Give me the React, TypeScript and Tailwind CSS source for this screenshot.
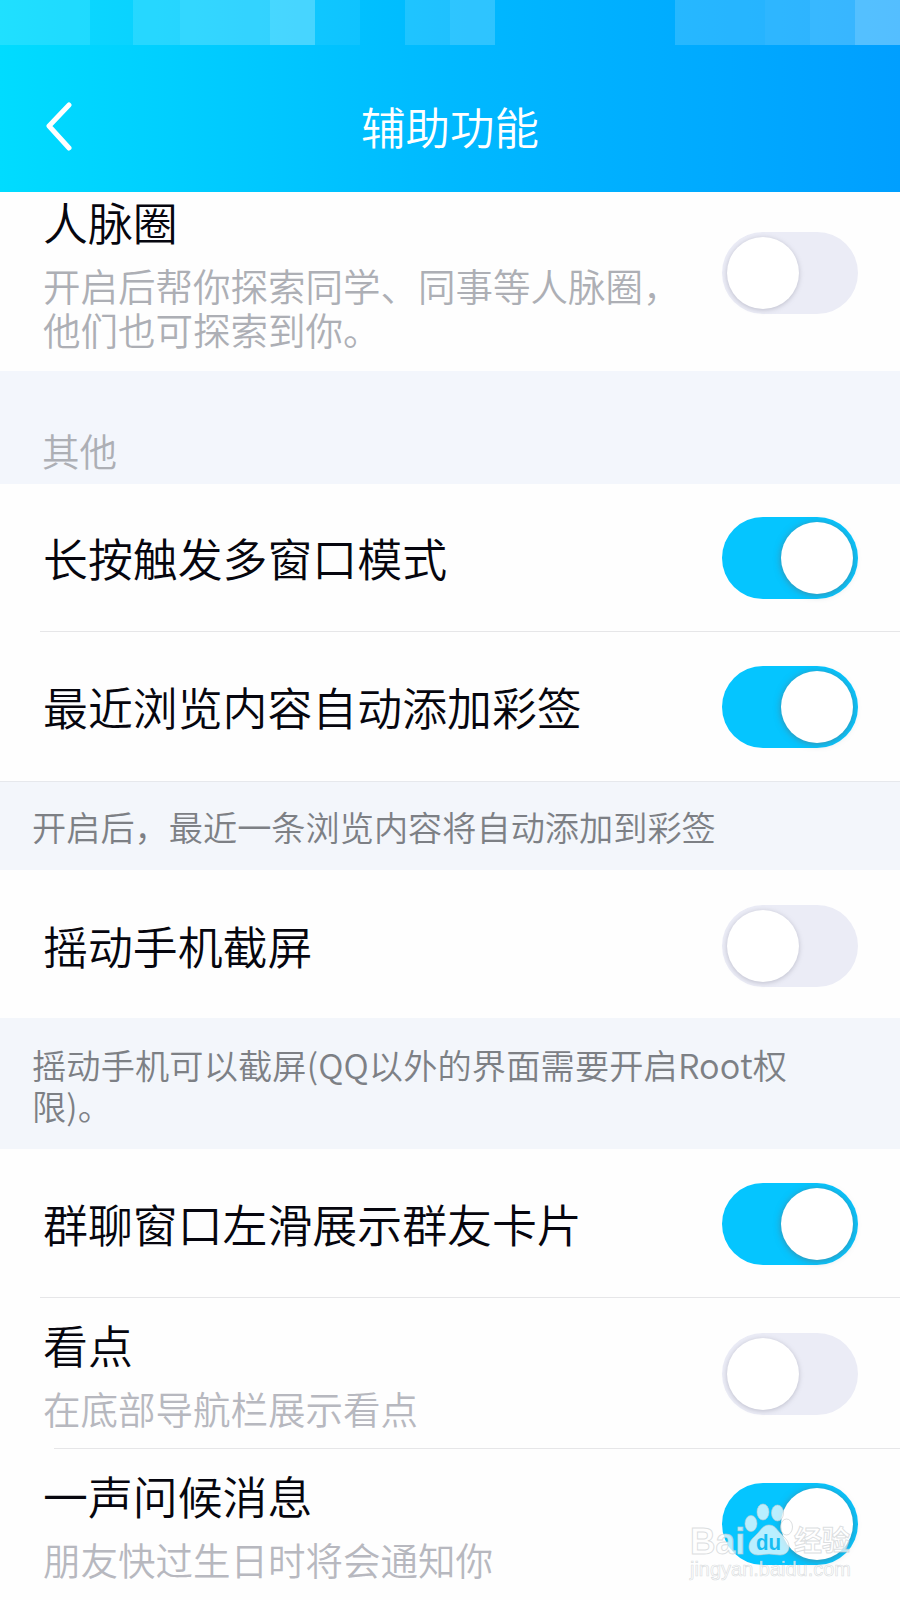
import clsx from "clsx";

function Toggle({ on = false, className }: { on?: boolean; className?: string }) {
  return (
    <button
      role="switch"
      aria-checked={on}
      className={clsx(
        "flex h-[82px] w-[136px] shrink-0 items-center rounded-full px-[5px]",
        on ? "justify-end bg-[#05c5ff]" : "justify-start bg-[#ebecf6]",
        className
      )}
    >
      <span
        className={clsx(
          "size-[72px] rounded-full bg-white",
          on
            ? "shadow-[0_1px_7px_rgba(90,110,120,0.65)]"
            : "shadow-[0_1px_5px_rgba(120,120,140,0.4)]"
        )}
      />
    </button>
  );
}

function Title({ children }: { children: string }) {
  return (
    <h2 className="text-[44.9px] leading-[60px] font-[350] whitespace-nowrap text-[#06060e]">
      {children}
    </h2>
  );
}

function Watermark() {
  return (
    <div className="absolute top-[1501px] left-[688px] h-[84px] w-[170px]">
      <svg
        viewBox="0 0 170 84"
        className="h-full w-full"
        fontFamily="'Liberation Sans', 'Noto Sans CJK SC', sans-serif"
      >
        <g fill="#fff" fillOpacity="0.72" stroke="#c4c9cc" strokeOpacity="0.6" strokeWidth="1">
          <text x="2" y="53" fontSize="36" fontWeight="700" textLength="55" lengthAdjust="spacingAndGlyphs">
            Bai
          </text>
          <ellipse cx="63" cy="22.500" rx="6" ry="8" />
          <ellipse cx="75" cy="11" rx="6" ry="8" />
          <ellipse cx="89.500" cy="12" rx="6" ry="8" />
          <ellipse cx="98.500" cy="26" rx="6" ry="8" />
          <path d="M81 24c-6 0-8 5-12 9-4 4-8 7-8 13 0 5 4 8 9 8 4 0 7-1 11-1s7 1 11 1c5 0 9-3 9-8 0-6-4-9-8-13-4-4-6-9-12-9z" />
          <text x="106" y="50" fontSize="28" fontWeight="700" textLength="56" lengthAdjust="spacingAndGlyphs">
            经验
          </text>
          <text x="2" y="75" fontSize="21" strokeWidth="0.7" textLength="161" lengthAdjust="spacingAndGlyphs">
            jingyan.baidu.com
          </text>
        </g>
        <text x="68" y="49" fontSize="22" fontWeight="700" fill="#16bdf2" textLength="25" lengthAdjust="spacingAndGlyphs">
          du
        </text>
      </svg>
    </div>
  );
}

export default function App() {
  return (
    <div className="relative flex h-[1600px] w-[900px] flex-col overflow-hidden bg-[#fefefe] font-['Noto_Sans_CJK_SC',sans-serif]">
      {/* Header with the masked status bar */}
      <header className="flex h-[192px] shrink-0 flex-col bg-linear-to-r from-[#00dcff] via-[#00b9ff] via-50% to-[#009fff]">
        <div className="flex h-[45px] shrink-0">
          <div className="w-[90px] bg-white/12" />
          <div className="w-[43px] bg-white/4" />
          <div className="w-[47px] bg-white/15" />
          <div className="w-[90px] bg-white/20" />
          <div className="w-[45px] bg-white/28" />
          <div className="w-[45px] bg-white/6" />
          <div className="w-[45px]" />
          <div className="w-[45px] bg-white/12" />
          <div className="w-[45px] bg-white/18" />
          <div className="w-[180px]" />
          <div className="w-[90px] bg-white/15" />
          <div className="w-[45px] bg-white/18" />
          <div className="w-[45px] bg-white/22" />
          <div className="w-[45px] bg-white/33" />
        </div>
        <div className="grid h-[147px] grid-cols-[1fr_auto_1fr] items-center">
          <button aria-label="返回" className="pt-[14px] pl-[42px]">
            <svg width="32" height="50" viewBox="0 0 32 50" fill="none" stroke="#fff" strokeWidth="5" strokeLinecap="round" strokeLinejoin="round">
              <path d="M27 4L7 25L27 47" />
            </svg>
          </button>
          <h1 className="pt-[15px] text-[44.500px] leading-[60px] font-[350] text-white">辅助功能</h1>
        </div>
      </header>

      <section className="flex h-[179px] shrink-0 justify-between pr-[42px] pl-[43px]">
        <div>
          <Title>人脉圈</Title>
          <p className="mt-[11px] w-[650px] text-[37.500px] leading-[44px] font-[350] text-[#adafb5]">
            开启后帮你探索同学、同事等人脉圈，他们也可探索到你。
          </p>
        </div>
        <Toggle className="mt-[40px]" />
      </section>

      <div className="flex h-[113px] shrink-0 items-end bg-[#f3f6fc] pb-[12px] pl-[42px]">
        <p className="text-[37.500px] leading-[44px] font-[350] text-[#adafb5]">其他</p>
      </div>

      <section className="shrink-0">
        <div className="flex h-[147px] items-center justify-between pr-[42px] pl-[43px]">
          <Title>长按触发多窗口模式</Title>
          <Toggle on />
        </div>
        <div className="ml-[40px] h-px bg-[#e6e6e8]" />
        <div className="flex h-[149px] items-center justify-between pt-px pr-[42px] pl-[43px]">
          <Title>最近浏览内容自动添加彩签</Title>
          <Toggle on />
        </div>
      </section>

      <div className="flex h-[89px] shrink-0 items-center border-t border-[#e6e8ec] bg-[#f3f6fb] pl-[32px]">
        <p className="text-[34.200px] leading-[41px] font-[350] text-[#7d8085]">
          开启后，最近一条浏览内容将自动添加到彩签
        </p>
      </div>

      <section className="flex h-[148px] shrink-0 items-center justify-between pt-[3px] pr-[42px] pl-[43px]">
        <Title>摇动手机截屏</Title>
        <Toggle />
      </section>

      <div className="h-[131px] shrink-0 bg-[#f3f6fb] pt-[26px] pl-[32px]">
        <p className="w-[780px] text-[34.200px] leading-[41px] font-[350] tracking-[0.15px] text-[#7d8085]">
          摇动手机可以截屏(QQ以外的界面需要开启Root权限)。
        </p>
      </div>

      <section className="shrink-0">
        <div className="flex h-[148px] items-center justify-between pt-[2px] pr-[42px] pl-[43px]">
          <Title>群聊窗口左滑展示群友卡片</Title>
          <Toggle on />
        </div>
        <div className="ml-[40px] h-px bg-[#e6e6e8]" />
        <div className="flex h-[150px] justify-between pr-[42px] pl-[43px]">
          <div className="pt-[17px]">
            <Title>看点</Title>
            <p className="mt-[11px] text-[37.500px] leading-[44px] font-[350] text-[#b7b8bf]">在底部导航栏展示看点</p>
          </div>
          <Toggle className="mt-[35px]" />
        </div>
        <div className="ml-[54px] h-px bg-[#e6e6e8]" />
        <div className="flex h-[151px] justify-between pr-[42px] pl-[43px]">
          <div className="pt-[17px]">
            <Title>一声问候消息</Title>
            <p className="mt-[11px] text-[37.500px] leading-[44px] font-[350] text-[#b7b8bf]">朋友快过生日时将会通知你</p>
          </div>
          <Toggle on className="mt-[34px]" />
        </div>
      </section>

      <Watermark />
    </div>
  );
}
